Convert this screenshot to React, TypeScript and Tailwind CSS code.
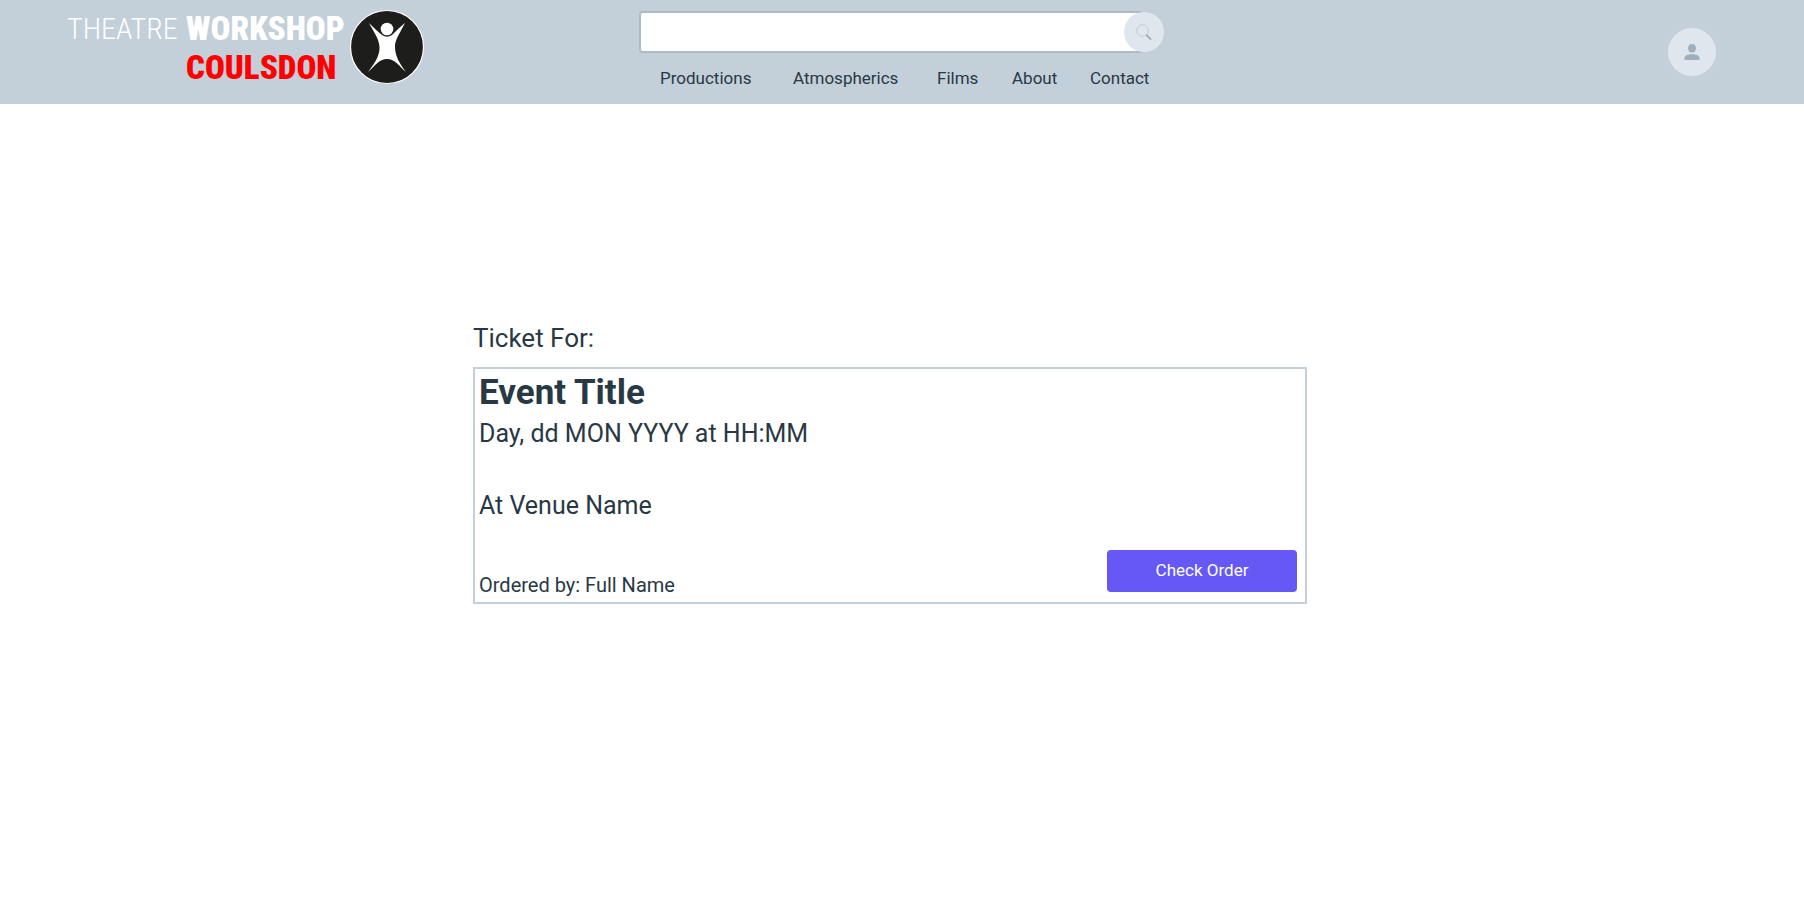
import React from "react";

const links = ["Productions", "Atmospherics", "Films", "About", "Contact"];

function FigureMark() {
  return (
    <svg viewBox="0 0 76 76" className="mt-px size-[76px] shrink-0" aria-hidden="true">
      <circle cx="38" cy="38" r="36.500" fill="#1d1d1b" stroke="#fff" strokeWidth="1.200" />
      <circle cx="38" cy="20" r="6.300" fill="#fff" />
      <path
        d="M20 14 C24 18 28 22 33 26 Q38 29.500 43 26 C47 22 51 18 56 14 C52 22 47 29 46 36 C45.500 47 51 55 57 63 C50 57 46 50 38 50 C30 50 26 57 19 63 C25 55 31 47 30.500 38 C30 29 24 22 20 14 Z"
        fill="#fff"
      />
    </svg>
  );
}

function Logo() {
  return (
    <a href="#" className="flex w-max items-start pt-2 pl-[67px]">
      <span className="grid grid-cols-[119px_163px] pt-px font-['Roboto_Condensed','Liberation_Sans_Narrow',sans-serif] leading-[39px] whitespace-nowrap">
        <span className="text-[30px] text-white font-light">THEATRE</span>
        <span className="text-[33px] font-black text-white">WORKSHOP</span>
        <span className="col-start-2 text-[33px] font-black text-[#ff0000]">COULSDON</span>
      </span>
      <FigureMark />
    </a>
  );
}

export default function App() {
  return (
    <div className="font-[Roboto,sans-serif] text-[#293845]">
      <header className="grid min-h-[104px] grid-cols-[1fr_526px_1fr] bg-[#c3cfd9]">
        <Logo />
        <div className="pt-[11px]">
          <form role="search" className="relative" onSubmit={(e) => e.preventDefault()}>
            <input
              type="search"
              aria-label="Search"
              className="block h-[42px] w-[505px] rounded-[4px] border-2 border-[#adbbc8] bg-white px-3 text-[17px] outline-none"
            />
            <button
              type="submit"
              aria-label="Search"
              className="absolute top-px right-px flex size-10 items-center justify-center rounded-full bg-[#dfe6ee]"
            >
              <svg viewBox="0 0 16 16" className="size-4" fill="none" aria-hidden="true">
                <circle cx="6.500" cy="6.500" r="5.800" stroke="#b9c6d1" strokeWidth="0.900" />
                <path d="M10 10.500 L11 11.500" stroke="#9eb0bd" strokeWidth="1" />
                <path d="M11 11.500 L14.500 15" stroke="#9eb0bd" strokeWidth="1.800" strokeLinecap="round" />
              </svg>
            </button>
          </form>
          <nav className="grid grid-cols-[133px_144px_75px_78px_auto] pt-[13px] pl-[21px] text-[17px] leading-[24px]">
            {links.map((label) => (
              <a key={label} href="#">
                {label}
              </a>
            ))}
          </nav>
        </div>
        <div className="flex items-center justify-end pr-[88px]">
          <button
            type="button"
            aria-label="Account"
            className="flex size-12 items-center justify-center rounded-full bg-[#dfe6ee]"
          >
            <svg viewBox="0 0 16 16" className="size-4" fill="#9eb0bd" aria-hidden="true">
              <ellipse cx="8" cy="4.300" rx="3.900" ry="4.300" />
              <path d="M0.500 16 V14 C0.500 11.500 4 10.200 8 10.200 C12 10.200 15.500 11.500 15.500 14 V16 Z" />
            </svg>
          </button>
        </div>
      </header>

      <main className="px-6 pt-[216px]">
        <div className="mx-auto max-w-[858px] pr-6">
          <h2 className="text-[26px] leading-[36px]">Ticket For:</h2>
          <section className="mt-[11px] border-2 border-[#c3cfd9] pt-1 pr-2 pb-[10px] pl-1">
            <h1 className="text-[35px] leading-[40px] font-bold">Event Title</h1>
            <p className="mt-[3px] text-[25px] leading-[36px]">Day, dd MON YYYY at HH:MM</p>
            <p className="mt-9 text-[25px] leading-[36px]">At Venue Name</p>
            <div className="mt-[26px] flex items-end justify-between">
              <p className="text-[20px] leading-[14px]">Ordered by: Full Name</p>
              <button
                type="button"
                className="h-[42px] w-[190px] rounded-[4px] bg-[#6558f5] text-[17px] text-white"
              >
                Check Order
              </button>
            </div>
          </section>
        </div>
      </main>
    </div>
  );
}
